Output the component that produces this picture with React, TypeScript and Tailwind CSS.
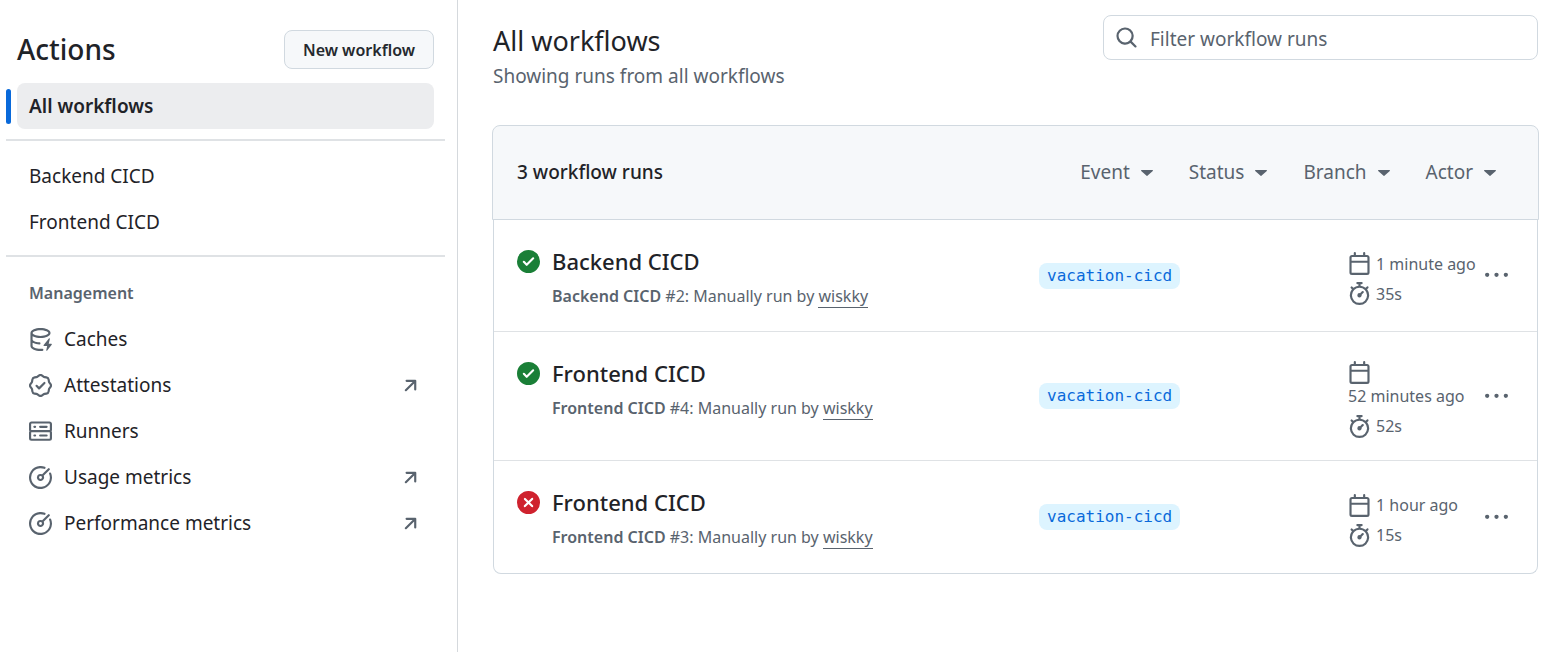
import React from "react";

const icons = {
  cache:
    "M2.5 5.724V8c0 .248.238.7 1.169 1.159.874.43 2.144.745 3.62.822a.75.75 0 1 1-.078 1.498c-1.622-.085-3.102-.432-4.204-.975a5.565 5.565 0 0 1-.507-.28V12.5c0 .133.058.318.282.551.227.237.591.483 1.101.707 1.015.447 2.47.742 4.117.742.406 0 .802-.018 1.183-.052a.751.751 0 1 1 .134 1.494C8.89 15.98 8.45 16 8 16c-1.805 0-3.475-.32-4.721-.869-.623-.274-1.173-.619-1.579-1.041-.408-.425-.7-.964-.7-1.59v-9c0-.626.292-1.165.7-1.591.406-.42.956-.766 1.579-1.04C4.525.32 6.195 0 8 0c1.806 0 3.476.32 4.721.869.623.274 1.173.619 1.579 1.041.408.425.7.964.7 1.59 0 .626-.292 1.165-.7 1.591-.406.42-.956.766-1.578 1.04C11.475 6.68 9.805 7 8 7c-1.805 0-3.475-.32-4.721-.869a6.15 6.15 0 0 1-.779-.407Zm0-2.224c0 .133.058.318.282.551.227.237.591.483 1.101.707C4.898 5.205 6.353 5.5 8 5.5c1.646 0 3.101-.295 4.118-.742.508-.224.873-.471 1.1-.708.224-.232.282-.417.282-.55 0-.133-.058-.318-.282-.551-.227-.237-.591-.483-1.101-.707C11.102 1.795 9.647 1.5 8 1.5c-1.646 0-3.101.295-4.118.742-.508.224-.873.471-1.1.708-.224.232-.282.417-.282.55ZM14.49 7.582a.375.375 0 0 0-.66-.313l-3.625 4.625a.375.375 0 0 0 .295.606h2.127l-.619 2.922a.375.375 0 0 0 .666.304l3.125-4.125A.375.375 0 0 0 15.5 11h-1.778l.769-3.418Z",
  verified:
    "m9.585.52.929.68c.153.112.331.186.518.215l1.138.175a2.678 2.678 0 0 1 2.24 2.24l.174 1.139c.029.187.103.365.215.518l.68.928a2.677 2.677 0 0 1 0 3.17l-.68.928a1.174 1.174 0 0 0-.215.518l-.175 1.138a2.678 2.678 0 0 1-2.241 2.241l-1.138.175a1.17 1.17 0 0 0-.518.215l-.928.68a2.677 2.677 0 0 1-3.17 0l-.928-.68a1.174 1.174 0 0 0-.518-.215L3.83 14.41a2.678 2.678 0 0 1-2.24-2.24l-.175-1.138a1.17 1.17 0 0 0-.215-.518l-.68-.928a2.677 2.677 0 0 1 0-3.17l.68-.928c.112-.153.186-.331.215-.518l.175-1.14a2.678 2.678 0 0 1 2.24-2.24l1.139-.175c.187-.029.365-.103.518-.215l.928-.68a2.677 2.677 0 0 1 3.17 0ZM7.303 1.728l-.927.68a2.67 2.67 0 0 1-1.18.489l-1.137.174a1.179 1.179 0 0 0-.987.987l-.174 1.136a2.677 2.677 0 0 1-.489 1.18l-.68.928a1.18 1.18 0 0 0 0 1.394l.68.927c.256.348.424.753.489 1.18l.174 1.137c.078.509.478.909.987.987l1.136.174a2.67 2.67 0 0 1 1.18.489l.928.68c.414.305.979.305 1.394 0l.927-.68a2.67 2.67 0 0 1 1.18-.489l1.137-.174a1.18 1.18 0 0 0 .987-.987l.174-1.136a2.67 2.67 0 0 1 .489-1.18l.68-.928a1.176 1.176 0 0 0 0-1.394l-.68-.927a2.686 2.686 0 0 1-.489-1.18l-.174-1.137a1.179 1.179 0 0 0-.987-.987l-1.136-.174a2.677 2.677 0 0 1-1.18-.489l-.928-.68a1.176 1.176 0 0 0-1.394 0ZM11.28 6.78l-3.75 3.75a.75.75 0 0 1-1.06 0L4.72 8.78a.751.751 0 0 1 .018-1.042.751.751 0 0 1 1.042-.018L7 8.94l3.22-3.22a.751.751 0 0 1 1.042.018.751.751 0 0 1 .018 1.042Z",
  server:
    "M1.75 1h12.5c.966 0 1.75.784 1.75 1.75v4c0 .372-.116.717-.314 1 .198.283.314.628.314 1v4a1.75 1.75 0 0 1-1.75 1.75H1.75A1.75 1.75 0 0 1 0 12.75v-4c0-.358.109-.707.314-1a1.739 1.739 0 0 1-.314-1v-4C0 1.784.784 1 1.75 1ZM1.5 2.75v4c0 .138.112.25.25.25h12.5a.25.25 0 0 0 .25-.25v-4a.25.25 0 0 0-.25-.25H1.75a.25.25 0 0 0-.25.25Zm.25 5.75a.25.25 0 0 0-.25.25v4c0 .138.112.25.25.25h12.5a.25.25 0 0 0 .25-.25v-4a.25.25 0 0 0-.25-.25ZM7 4.75A.75.75 0 0 1 7.75 4h4.5a.75.75 0 0 1 0 1.5h-4.5A.75.75 0 0 1 7 4.75ZM7.75 10h4.5a.75.75 0 0 1 0 1.5h-4.5a.75.75 0 0 1 0-1.5ZM3 4.75A.75.75 0 0 1 3.75 4h.5a.75.75 0 0 1 0 1.5h-.5A.75.75 0 0 1 3 4.75ZM3.75 10h.5a.75.75 0 0 1 0 1.5h-.5a.75.75 0 0 1 0-1.5Z",
  meter:
    "M8 1.5a6.5 6.5 0 1 0 6.016 4.035.75.75 0 0 1 1.388-.57 8 8 0 1 1-4.37-4.37.75.75 0 0 1-.569 1.389A6.479 6.479 0 0 0 8 1.5Zm6.28.22a.75.75 0 0 1 0 1.06l-4.063 4.064a2.5 2.5 0 1 1-1.06-1.06L13.22 1.72a.75.75 0 0 1 1.06 0ZM7 8a1 1 0 1 0 2 0 1 1 0 0 0-2 0Z",
  arrow:
    "M4.53 4.75A.75.75 0 0 1 5.28 4h6.01a.75.75 0 0 1 .75.75v6.01a.75.75 0 0 1-1.5 0v-4.2l-5.26 5.261a.749.749 0 0 1-1.275-.326.749.749 0 0 1 .215-.734L9.48 5.5h-4.2a.75.75 0 0 1-.75-.75Z",
  success:
    "M8 16A8 8 0 1 1 8 0a8 8 0 0 1 0 16Zm3.78-9.72a.751.751 0 0 0-.018-1.042.751.751 0 0 0-1.042-.018L6.75 9.19 5.28 7.72a.751.751 0 0 0-1.042.018.751.751 0 0 0-.018 1.042l2 2a.75.75 0 0 0 1.06 0Z",
  failure:
    "M2.343 13.657A8 8 0 1 1 13.658 2.343 8 8 0 0 1 2.343 13.657ZM6.03 4.97a.751.751 0 0 0-1.042.018.751.751 0 0 0-.018 1.042L6.94 8 4.97 9.97a.749.749 0 0 0 .326 1.275.749.749 0 0 0 .734-.215L8 9.06l1.97 1.97a.749.749 0 0 0 1.275-.326.749.749 0 0 0-.215-.734L9.06 8l1.97-1.97a.749.749 0 0 0-.326-1.275.749.749 0 0 0-.734.215L8 6.94Z",
  calendar:
    "M4.75 0a.75.75 0 0 1 .75.75V2h5V.75a.75.75 0 0 1 1.5 0V2h1.25c.966 0 1.75.784 1.75 1.75v10.5A1.75 1.75 0 0 1 13.25 16H2.75A1.75 1.75 0 0 1 1 14.25V3.75C1 2.784 1.784 2 2.75 2H4V.75A.75.75 0 0 1 4.75 0ZM2.5 7.5v6.75c0 .138.112.25.25.25h10.5a.25.25 0 0 0 .25-.25V7.5Zm10.75-4H2.75a.25.25 0 0 0-.25.25V6h11V3.75a.25.25 0 0 0-.25-.25Z",
  stopwatch:
    "M5.75.75A.75.75 0 0 1 6.5 0h3a.75.75 0 0 1 0 1.5h-.75v1l-.001.041a6.724 6.724 0 0 1 3.464 1.435l.007-.006.75-.75a.749.749 0 0 1 1.275.326.749.749 0 0 1-.215.734l-.75.75-.006.007a6.75 6.75 0 1 1-10.548 0L2.72 5.03l-.75-.75a.751.751 0 0 1 .018-1.042.751.751 0 0 1 1.042-.018l.75.75.007.006A6.72 6.72 0 0 1 7.25 2.541V1.5H6.5a.75.75 0 0 1-.75-.75ZM8 14.5a5.25 5.25 0 1 0-.001-10.501A5.25 5.25 0 0 0 8 14.5Zm.389-6.7 1.33-1.33a.75.75 0 1 1 1.061 1.06L9.45 8.861A1.503 1.503 0 0 1 8 10.75a1.499 1.499 0 1 1 .389-2.95Z",
  kebab:
    "M8 9a1.5 1.5 0 1 0 0-3 1.5 1.5 0 0 0 0 3ZM1.5 9a1.5 1.5 0 1 0 0-3 1.5 1.5 0 0 0 0 3Zm13 0a1.5 1.5 0 1 0 0-3 1.5 1.5 0 0 0 0 3Z",
  search:
    "M10.68 11.74a6 6 0 0 1-7.922-8.982 6 6 0 0 1 8.982 7.922l3.04 3.04a.749.749 0 0 1-.326 1.275.749.749 0 0 1-.734-.215ZM11.5 7a4.499 4.499 0 1 0-8.997 0A4.499 4.499 0 0 0 11.5 7Z",
};

type IconName = keyof typeof icons;

function Icon({ name, className = "text-[#59636e]" }: { name: IconName; className?: string }) {
  return (
    <svg viewBox="0 0 16 16" aria-hidden="true" className={`size-[23px] shrink-0 fill-current ${className}`}>
      <path d={icons[name]} />
    </svg>
  );
}

const workflows = ["Backend CICD", "Frontend CICD"];

const management: { label: string; icon: IconName; external?: boolean }[] = [
  { label: "Caches", icon: "cache" },
  { label: "Attestations", icon: "verified", external: true },
  { label: "Runners", icon: "server" },
  { label: "Usage metrics", icon: "meter", external: true },
  { label: "Performance metrics", icon: "meter", external: true },
];

const filters = ["Event", "Status", "Branch", "Actor"];

const runs = [
  { id: 2, name: "Backend CICD", ok: true, ago: "1 minute ago", duration: "35s" },
  { id: 4, name: "Frontend CICD", ok: true, ago: "52 minutes ago", duration: "52s" },
  { id: 3, name: "Frontend CICD", ok: false, ago: "1 hour ago", duration: "15s" },
];

function Sidebar() {
  return (
    <aside className="w-[458px] shrink-0 border-r border-[#d5d9dd] pt-[30px] pr-3 pl-1.5">
      <div className="flex items-center justify-between px-[11px]">
        <h2 className="text-[28px] leading-[39px] font-medium">Actions</h2>
        <button
          type="button"
          className="h-[39px] rounded-lg border border-[#d1d9e0] bg-[#f6f8fa] px-[18px] text-base font-semibold text-[#25292e]"
        >
          New workflow
        </button>
      </div>
      <nav aria-label="Actions">
        <div className="mt-3.5 flex items-center gap-1.5 pr-[11px]">
          <span className="h-[35px] w-[5px] shrink-0 rounded-md bg-[#0969da]" />
          <a
            href="#all"
            aria-current="page"
            className="flex h-[46px] flex-1 items-center rounded-lg bg-[#ecedef] px-3 text-[19px] font-semibold"
          >
            All workflows
          </a>
        </div>
        <ul className="mt-2.5 border-y-2 border-[#dfe2e5] px-[11px] pt-3 pb-2.5">
          {workflows.map((name) => (
            <li key={name}>
              <a href="#workflow" className="flex h-[46px] items-center px-3 text-[19px]">
                {name}
              </a>
            </li>
          ))}
        </ul>
        <div className="px-[11px] pt-[22px]">
          <h3 className="px-3 text-base leading-7 font-semibold text-[#59636e]">Management</h3>
          <ul className="mt-[9px]">
            {management.map((item) => (
              <li key={item.label}>
                <a href="#management" className="flex h-[46px] items-center gap-3 px-3 text-[19px]">
                  <Icon name={item.icon} />
                  <span className="flex-1">{item.label}</span>
                  {item.external && <Icon name="arrow" />}
                </a>
              </li>
            ))}
          </ul>
        </div>
      </nav>
    </aside>
  );
}

function RunRow({ run }: { run: (typeof runs)[number] }) {
  return (
    <li className="flex min-h-28 items-center border-b border-[#dfe2e5] py-5 pr-[29px] pl-[23px] last:border-b-0">
      <div className="flex min-w-0 flex-1 gap-3 self-start">
        <div className="flex h-[42px] items-center">
          <Icon name={run.ok ? "success" : "failure"} className={run.ok ? "text-[#1a7f37]" : "text-[#cf222e]"} />
        </div>
        <div className="min-w-0">
          <a href="#run" className="block text-[22px] leading-[42px] font-medium">
            {run.name}
          </a>
          <p className="text-base leading-7 text-[#59636e]">
            <span className="font-semibold">{run.name}</span> #{run.id}: Manually run by{" "}
            <a href="#wiskky" className="border-b border-[#59636e]">
              wiskky
            </a>
          </p>
        </div>
      </div>
      <div className="flex w-[309px] shrink-0">
        <a
          href="#branch"
          className="rounded-lg bg-[#ddf4ff] px-2 font-['DejaVu_Sans_Mono',monospace] text-base leading-[26px] text-[#0969da]"
        >
          vacation-cicd
        </a>
      </div>
      <div className="flex w-[137px] shrink-0 flex-col gap-1.5 pt-2 pb-0.5 text-base leading-6 text-[#59636e]">
        <div className="flex flex-wrap items-center gap-x-[5px]">
          <span className="flex h-6 items-center">
            <Icon name="calendar" />
          </span>
          <span className="whitespace-nowrap">{run.ago}</span>
        </div>
        <div className="flex items-center gap-[5px]">
          <Icon name="stopwatch" />
          <span>{run.duration}</span>
        </div>
      </div>
      <button type="button" aria-label="Show options">
        <Icon name="kebab" />
      </button>
    </li>
  );
}

export default function App() {
  return (
    <div className="flex min-h-screen bg-white font-['Noto_Sans',sans-serif] text-[#1f2328]">
      <Sidebar />
      <main className="min-w-0 flex-1 pt-[15px] pr-[25px] pb-8 pl-[35px]">
        <header className="flex items-start justify-between">
          <div className="pt-2">
            <h1 className="text-[27px] leading-9">All workflows</h1>
            <p className="text-[19px] leading-[34px] text-[#59636e]">Showing runs from all workflows</p>
          </div>
          <label className="flex h-[45px] w-[435px] items-center gap-3 rounded-lg border border-[#d1d9e0] px-[11px]">
            <Icon name="search" />
            <input
              type="text"
              aria-label="Filter workflow runs"
              placeholder="Filter workflow runs"
              className="h-full min-w-0 flex-1 bg-transparent pt-0.5 text-[19px] outline-none placeholder:text-[#59636e]"
            />
          </label>
        </header>

        <section className="mt-8">
          <div className="-mx-px flex h-[95px] items-center justify-between rounded-t-lg border border-[#d1d9e0] bg-[#f6f8fa] pr-[42px] pl-6">
            <h2 className="text-[19px] font-medium">3 workflow runs</h2>
            <div className="flex gap-9">
              {filters.map((name) => (
                <button key={name} type="button" className="flex items-center gap-[11px] text-[19px] text-[#59636e]">
                  {name}
                  <svg viewBox="0 0 12 6" aria-hidden="true" className="h-1.5 w-3 fill-current">
                    <path d="M.6 0h10.8c.5 0 .8.6.4 1L6.4 5.8a.6.6 0 0 1-.8 0L.2 1C-.2.6.1 0 .6 0Z" />
                  </svg>
                </button>
              ))}
            </div>
          </div>
          <ul className="rounded-b-lg border border-t-0 border-[#d1d9e0]">
            {runs.map((run) => (
              <RunRow key={run.id} run={run} />
            ))}
          </ul>
        </section>
      </main>
    </div>
  );
}
